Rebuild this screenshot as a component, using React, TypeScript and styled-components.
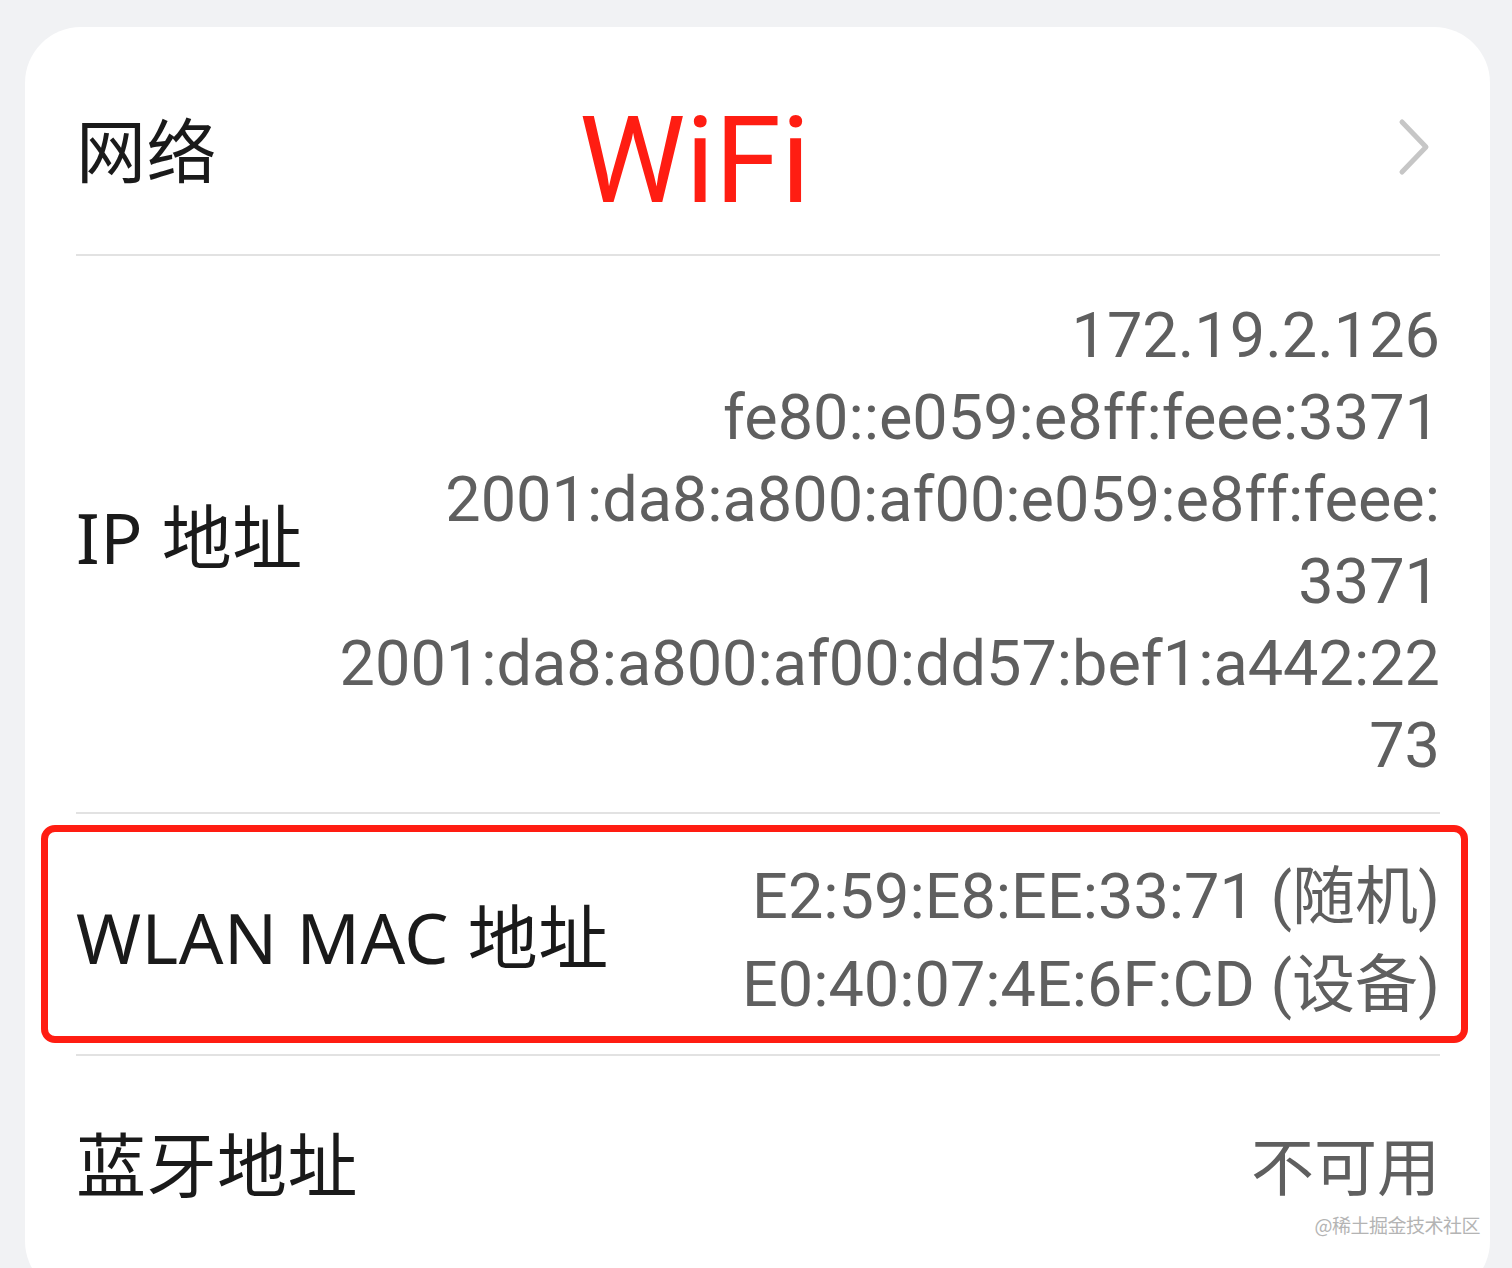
import React from 'react';
import styled, { createGlobalStyle } from 'styled-components';

const GlobalStyle = createGlobalStyle`
  html, body {
    margin: 0;
    padding: 0;
    background: #f1f2f4;
    overflow: hidden;
  }
  body {
    font-family: "Noto Sans", "Noto Sans CJK SC", sans-serif;
  }
`;

const ipLines = [
  '172.19.2.126',
  'fe80::e059:e8ff:feee:3371',
  '2001:da8:a800:af00:e059:e8ff:feee:',
  '3371',
  '2001:da8:a800:af00:dd57:bef1:a442:22',
  '73',
];

const macLines = ['E2:59:E8:EE:33:71 (随机)', 'E0:40:07:4E:6F:CD (设备)'];

const Chevron = () => (
  <svg width="36" height="62" viewBox="0 0 36 62" fill="none">
    <path d="M6 6 L30 31 L6 56" stroke="#c6c6c6" strokeWidth="5" strokeLinecap="round" strokeLinejoin="round" />
  </svg>
);

export default function App() {
  return (
    <Page>
      <GlobalStyle />
      <Card>
        <Row $height={229}>
          <Label $shift={15}>网络</Label>
          <Annotation>WiFi</Annotation>
          <Arrow>
            <Chevron />
          </Arrow>
        </Row>

        <Row $height={558}>
          <Label>IP 地址</Label>
          <Values $lineHeight={82}>
            {ipLines.map((line, i) => (
              <span key={i}>{line}</span>
            ))}
          </Values>
        </Row>

        <Row $height={242} $padded>
          <Highlight>
            <Label>WLAN MAC 地址</Label>
            <Values $lineHeight={88}>
              {macLines.map((line) => (
                <span key={line}>{line}</span>
              ))}
            </Values>
          </Highlight>
        </Row>

        <Row $height={212} $last>
          <Label>蓝牙地址</Label>
          <Values $lineHeight={82}>
            <span>不可用</span>
          </Values>
        </Row>
      </Card>
      <Watermark>@稀土掘金技术社区</Watermark>
    </Page>
  );
}

const Page = styled.div`
  position: relative;
  width: 1512px;
  height: 1268px;
  padding: 27px 22px 0 25px;
  box-sizing: border-box;
  overflow: hidden;
`;

const Card = styled.div`
  background: #ffffff;
  border-radius: 56px;
  padding: 0 50px 0 51px;
  height: 1270px;
  box-sizing: border-box;
  display: flex;
  flex-direction: column;
`;

const Row = styled.div<{ $height: number; $padded?: boolean; $last?: boolean }>`
  height: ${(p) => p.$height}px;
  box-sizing: border-box;
  display: flex;
  align-items: center;
  flex-shrink: 0;
  padding: ${(p) => (p.$padded ? '11px 0' : '0')};
  border-bottom: ${(p) => (p.$last ? 'none' : '2px solid #e2e2e2')};
`;

const Label = styled.div<{ $shift?: number }>`
  font-family: "Noto Sans", "Noto Sans CJK SC", sans-serif;
  font-size: 70px;
  color: #1a1a1a;
  white-space: nowrap;
  letter-spacing: 0.5px;
  margin-top: ${(p) => p.$shift ?? 0}px;
`;

const Annotation = styled.div`
  font-family: Roboto, sans-serif;
  font-size: 120px;
  color: #ff1d12;
  margin-left: 362px;
  margin-top: 40px;
  line-height: 1;
`;

const Arrow = styled.div`
  margin-left: auto;
  margin-right: 8px;
  display: flex;
  align-items: center;
  margin-top: 12px;
`;

const Values = styled.div<{ $lineHeight: number }>`
  margin-left: auto;
  margin-top: 14px;
  display: flex;
  flex-direction: column;
  align-items: flex-end;
  font-family: Roboto, "Noto Sans CJK SC", sans-serif;
  font-size: 63px;
  line-height: ${(p) => p.$lineHeight}px;
  color: #5f5f5f;
  white-space: nowrap;
  text-align: right;
`;

const Highlight = styled.div`
  flex: 1;
  align-self: stretch;
  display: flex;
  align-items: center;
  margin: 0 -28px 0 -35px;
  padding: 0 21px 0 28px;
  border: 7px solid #ff1d12;
  border-radius: 14px;
`;

const Watermark = styled.div`
  position: absolute;
  right: 32px;
  bottom: 30px;
  font-family: "Noto Sans CJK SC", sans-serif;
  font-size: 19px;
  color: #b4b4b4;
  letter-spacing: -0.5px;
`;
